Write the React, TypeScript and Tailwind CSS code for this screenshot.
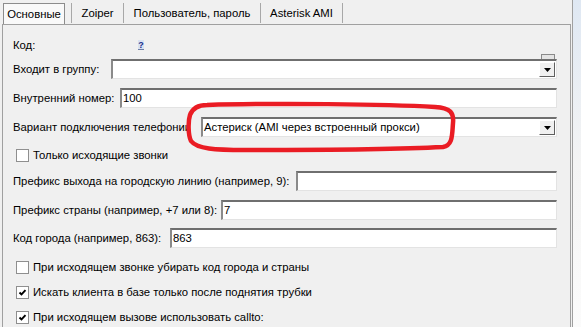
import React from 'react'

const sunken =
  'bg-white border-t-2 border-l-2 border-r border-b border-t-[#6f6f6f] border-l-[#8a8a8a] border-r-[#e3e3e3] border-b-[#e3e3e3]'

function Arrow() {
  return (
    <div className="w-[16px] h-[15px] mr-px bg-[#f0f0f0] border border-t-white border-l-white border-r-[#5f5f5f] border-b-[#5f5f5f] flex items-center justify-center">
      <svg width="7" height="4" viewBox="0 0 7 4">
        <path d="M0 0 H7 L3.5 4 Z" fill="#000" />
      </svg>
    </div>
  )
}

function Check({ checked }: { checked?: boolean }) {
  return (
    <div className="w-[13px] h-[13px] ml-[3px] mr-[4px] bg-white border border-[#8f8f8f] flex items-center justify-center shrink-0">
      {checked && (
        <svg width="11" height="11" viewBox="0 0 11 11">
          <polyline points="2.5,5.5 4.5,7.5 8.5,3.2" fill="none" stroke="#000" strokeWidth="1.9" />
        </svg>
      )}
    </div>
  )
}

function Tab({ w, label }: { w: string; label: string }) {
  return (
    <>
      <div className={`${w} h-[21px] flex items-center justify-center whitespace-nowrap`}>{label}</div>
      <div className="w-px h-[20px] bg-[#a8a8a8]" />
    </>
  )
}

export default function App() {
  return (
    <div
      className="relative w-[581px] h-[327px] flex overflow-hidden bg-[#f0f0f0] text-[11.3px] text-black whitespace-nowrap"
      style={{ fontFamily: '"Liberation Sans", Arial, sans-serif' }}
    >
      <div className="w-[572px] flex flex-col">
        {/* tabs */}
        <div className="h-[24px] flex items-start pt-[3px]">
          <div className="ml-[3px] w-[62px] h-[21px] border border-[#8c8c8c] border-b-0 bg-[#f9f9f9] flex items-center justify-center">
            Основные
          </div>
          <div className="w-[6px]" />
          <div className="w-px h-[20px] bg-[#a8a8a8]" />
          <Tab w="w-[51px]" label="Zoiper" />
          <Tab w="w-[136px]" label="Пользователь, пароль" />
          <Tab w="w-[81px]" label="Asterisk AMI" />
        </div>

        {/* panel */}
        <div className="flex-1 ml-[2px] mr-px border border-b-0 border-[#a0a0a0] pl-[10px] pr-[13px] flex flex-col">
          <div className="h-[20px] mt-[10px] flex items-center">
            <span className="w-[125px]">Код:</span>
            <span className="w-[6px] h-[10px] bg-[#d9e2f2] border-b border-[#6d7fa8] text-[#1b2f8a] text-[9px] leading-[10px] font-bold flex items-center justify-center">
              ?
            </span>
          </div>

          <div className="relative h-[20px] mt-[4px] flex items-center">
            <span className="w-[98px] shrink-0">Входит в группу:</span>
            <div className={`${sunken} flex-1 h-[20px] flex items-center justify-end`}>
              <Arrow />
            </div>
            <div className="absolute right-[2px] top-[-5px] w-[14px] h-[5px] border border-b-0 border-[#8a8a8a] bg-[#e4e4e4]" />
          </div>

          <div className="h-[20px] mt-[9px] flex items-center">
            <span className="w-[107px] shrink-0">Внутренний номер:</span>
            <div className={`${sunken} flex-1 h-[20px] flex items-center pl-[1px]`}>100</div>
          </div>

          <div className="h-[20px] mt-[9px] flex items-center">
            <span className="w-[175px] mr-[13px] shrink-0 overflow-hidden">Вариант подключения телефонии:</span>
            <div className={`${sunken} flex-1 h-[20px] flex items-center justify-between pl-[1px]`}>
              <span>Астериск (AMI через встроенный прокси)</span>
              <Arrow />
            </div>
          </div>

          <div className="h-[20px] mt-[8px] flex items-center">
            <Check />
            <span>Только исходящие звонки</span>
          </div>

          <div className="h-[20px] mt-[6px] flex items-center">
            <span className="w-[283px] shrink-0">Префикс выхода на городскую линию (например, 9):</span>
            <div className={`${sunken} flex-1 h-[20px]`} />
          </div>

          <div className="h-[20px] mt-[9px] flex items-center">
            <span className="w-[208px] shrink-0">Префикс страны (например, +7 или 8):</span>
            <div className={`${sunken} flex-1 h-[20px] flex items-center pl-[1px]`}>7</div>
          </div>

          <div className="h-[20px] mt-[8px] flex items-center">
            <span className="w-[157px] shrink-0">Код города (например, 863):</span>
            <div className={`${sunken} flex-1 h-[20px] flex items-center pl-[1px]`}>863</div>
          </div>

          <div className="h-[20px] mt-[9px] flex items-center">
            <Check />
            <span>При исходящем звонке убирать код города и страны</span>
          </div>

          <div className="h-[20px] mt-[5px] flex items-center">
            <Check checked />
            <span>Искать клиента в базе только после поднятия трубки</span>
          </div>

          <div className="h-[20px] mt-[5px] flex items-center">
            <Check checked />
            <span>При исходящем вызове использовать callto:</span>
          </div>
        </div>
      </div>

      {/* window edge */}
      <div className="flex-1 border-l border-[#a0a0a0] bg-gradient-to-b from-[#dfe8f3] via-[#f4f4f4] to-[#fbfbfb]" />

      {/* red marker */}
      <svg className="absolute left-[185px] top-[101px]" width="274" height="52" viewBox="0 0 274 52">
        <path
          d="M22 4 C90 2 200 3 250 6 C266 7 269 12 268 22 C267 34 268 44 258 46 C200 49 120 49 60 49 C30 49 12 48 6 40 C3 34 3 20 5 14 C8 6 14 4 22 4 Z"
          fill="none"
          stroke="#ea1c24"
          strokeWidth="4.5"
        />
      </svg>
    </div>
  )
}
